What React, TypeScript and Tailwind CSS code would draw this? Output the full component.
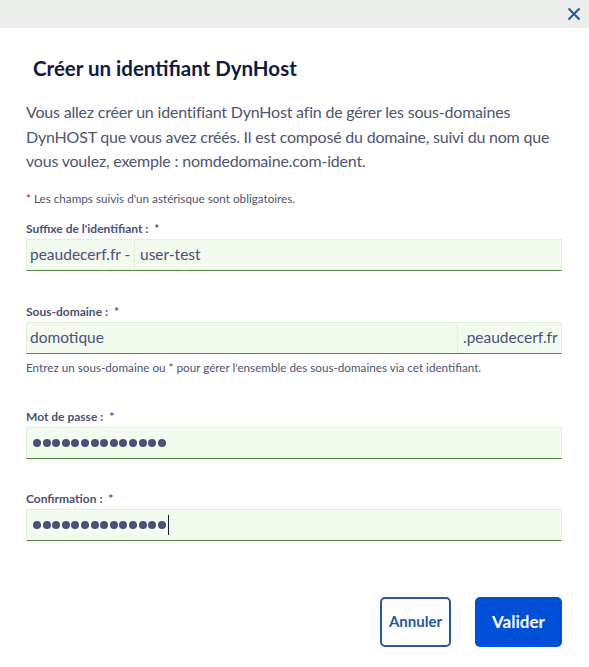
import React from "react";

const font = { fontFamily: "Lato, 'Open Sans', sans-serif" };

function Dots({ caret }: { caret?: boolean }) {
  return (
    <div className="flex items-center gap-[1.6px] pl-[6px] h-full">
      {Array.from({ length: 14 }).map((_, i) => (
        <div key={i} className="w-[8px] h-[8px] rounded-full bg-[#4a5078]" />
      ))}
      {caret && <div className="w-[1px] h-[20px] bg-[#1a1a2e] ml-[1px]" />}
    </div>
  );
}

function Label({ children }: { children: React.ReactNode }) {
  return (
    <div className="text-[12px] leading-[16px] font-bold text-[#4a5078] mb-[2px]">
      {children}&nbsp;: &nbsp;*
    </div>
  );
}

const inputBox =
  "flex h-[32px] bg-[#f2fbee] border border-[#e2efd9] border-b-[#4f8a3f] text-[15.5px] text-[#4a5078]";

export default function App() {
  return (
    <div className="w-[589px] h-[667px] bg-white overflow-hidden" style={font}>
      <div className="h-[28px] bg-[#eceeec] flex items-center justify-end pr-[8px]">
        <svg width="14" height="14" viewBox="0 0 14 14" fill="none">
          <path d="M1.5 1.5 L12.5 12.5 M12.5 1.5 L1.5 12.5" stroke="#2a5aa6" strokeWidth="2.2" />
        </svg>
      </div>
      <div className="pl-[33px] mt-[28px] text-[20.5px] leading-[24px] font-bold text-[#0e1a45]">
        Créer un identifiant DynHost
      </div>
      <div className="px-[26px] pr-[27px]">
        <p className="mt-[20px] text-[16px] leading-[24.5px] tracking-[-0.2px] text-[#4e5472]">
          Vous allez créer un identifiant DynHost afin de gérer les sous-domaines
          <br />
          DynHOST que vous avez créés. Il est composé du domaine, suivi du nom que
          <br />
          vous voulez, exemple : nomdedomaine.com-ident.
        </p>
        <div className="mt-[16px] text-[11.7px] leading-[16px] text-[#4e5472]">
          <span className="text-[#d0021b]">*</span> Les champs suivis d'un astérisque sont obligatoires.
        </div>

        <div className="mt-[15px]">
          <Label>Suffixe de l'identifiant</Label>
          <div className={inputBox}>
            <div className="w-[108px] flex items-center pl-[3px] border-r border-[#e2efd9]">peaudecerf.fr -</div>
            <div className="flex-1 flex items-center pl-[5px]">user-test</div>
          </div>
        </div>

        <div className="mt-[33px]">
          <Label>Sous-domaine</Label>
          <div className={inputBox}>
            <div className="flex-1 flex items-center pl-[3px]">domotique</div>
            <div className="w-[104px] flex items-center pl-[5px] border-l border-[#e2efd9]">.peaudecerf.fr</div>
          </div>
          <div className="mt-[5px] text-[11.7px] leading-[16px] text-[#4e5472]">
            Entrez un sous-domaine ou * pour gérer l'ensemble des sous-domaines via cet identifiant.
          </div>
        </div>

        <div className="mt-[34px]">
          <Label>Mot de passe</Label>
          <div className={inputBox}>
            <Dots />
          </div>
        </div>

        <div className="mt-[32px]">
          <Label>Confirmation</Label>
          <div className={inputBox}>
            <Dots caret />
          </div>
        </div>

        <div className="mt-[56px] flex justify-end gap-[24px]">
          <button className="w-[71px] h-[50px] rounded-[5px] border-2 border-[#22599f] text-[#22599f] text-[15px] font-bold bg-white">
            Annuler
          </button>
          <button className="w-[87px] h-[50px] rounded-[5px] bg-[#0050d7] text-white text-[17px] font-bold">
            Valider
          </button>
        </div>
      </div>
    </div>
  );
}
